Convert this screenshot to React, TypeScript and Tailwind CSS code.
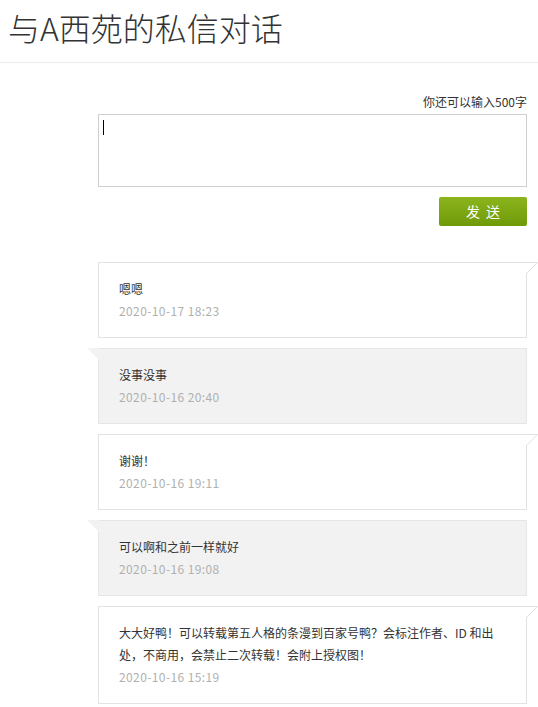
import React from 'react'

type Msg = { text: string; time: string; mine: boolean }

const messages: Msg[] = [
  { text: '嗯嗯', time: '2020-10-17 18:23', mine: true },
  { text: '没事没事', time: '2020-10-16 20:40', mine: false },
  { text: '谢谢！', time: '2020-10-16 19:11', mine: true },
  { text: '可以啊和之前一样就好', time: '2020-10-16 19:08', mine: false },
  {
    text: '大大好鸭！可以转载第五人格的条漫到百家号鸭？会标注作者、ID 和出处，不商用，会禁止二次转载！会附上授权图！',
    time: '2020-10-16 15:19',
    mine: true,
  },
]

const font = { fontFamily: '"Microsoft YaHei", "Noto Sans CJK SC", "Noto Sans", sans-serif' }

const Bubble = ({ msg }: { msg: Msg }) => {
  return (
    <div
      className={`relative border px-[20px] py-[15px] text-[12px] leading-[22px] ${
        msg.mine ? 'bg-white border-[#e3e3e3]' : 'bg-[#f2f2f2] border-[#e6e6e6]'
      }`}
    >
      {/* arrow */}
      {msg.mine ? (
        <svg className="absolute -top-px left-full" width="12" height="13" viewBox="0 0 12 13">
          <polygon points="0,0.5 11.5,0.5 0,12" fill="#fff" />
          <line x1="0" y1="0.5" x2="11.5" y2="0.5" stroke="#e3e3e3" />
          <line x1="11.5" y1="0.5" x2="0" y2="12" stroke="#e3e3e3" />
        </svg>
      ) : (
        <svg className="absolute -top-px right-full" width="12" height="13" viewBox="0 0 12 13">
          <polygon points="0,0 12,0 12,12" fill="#f2f2f2" />
        </svg>
      )}
      <div className="text-[#333] [text-spacing-trim:space-all]">{msg.text}</div>
      <div className="text-[#b0b0b0] tracking-[0.4px]">{msg.time}</div>
    </div>
  )
}

const App = () => {
  return (
    <div className="w-[538px] min-h-[707px] bg-white" style={font}>
      {/* Header */}
      <div className="h-[63px] border-b border-[#ececec] px-[8px] pt-[5px]">
        <h1 className="text-[32px] leading-[44px] font-light text-[#333]">与A西苑的私信对话</h1>
      </div>

      <div className="pl-[98px] pr-[11px] pt-[29px]">
        {/* Input */}
        <div className="text-right text-[12px] leading-[20px] text-[#333]">你还可以输入500字</div>
        <div className="relative mt-[2px] h-[73px] border border-[#cfcfcf] bg-white">
          <div className="absolute left-[4px] top-[5px] h-[15px] w-px bg-black"></div>
        </div>
        <div className="mt-[10px] flex justify-end">
          <button className="h-[29px] w-[88px] rounded-[2px] bg-gradient-to-b from-[#8cb51c] to-[#6f9a07] text-[14px] tracking-[6px] pl-[6px] text-white">
            发送
          </button>
        </div>

        {/* Messages */}
        <div className="mt-[36px] flex flex-col gap-[10px] pb-[10px]">
          {messages.map((m, i) => (
            <Bubble key={i} msg={m} />
          ))}
        </div>
      </div>
    </div>
  )
}

export default App
